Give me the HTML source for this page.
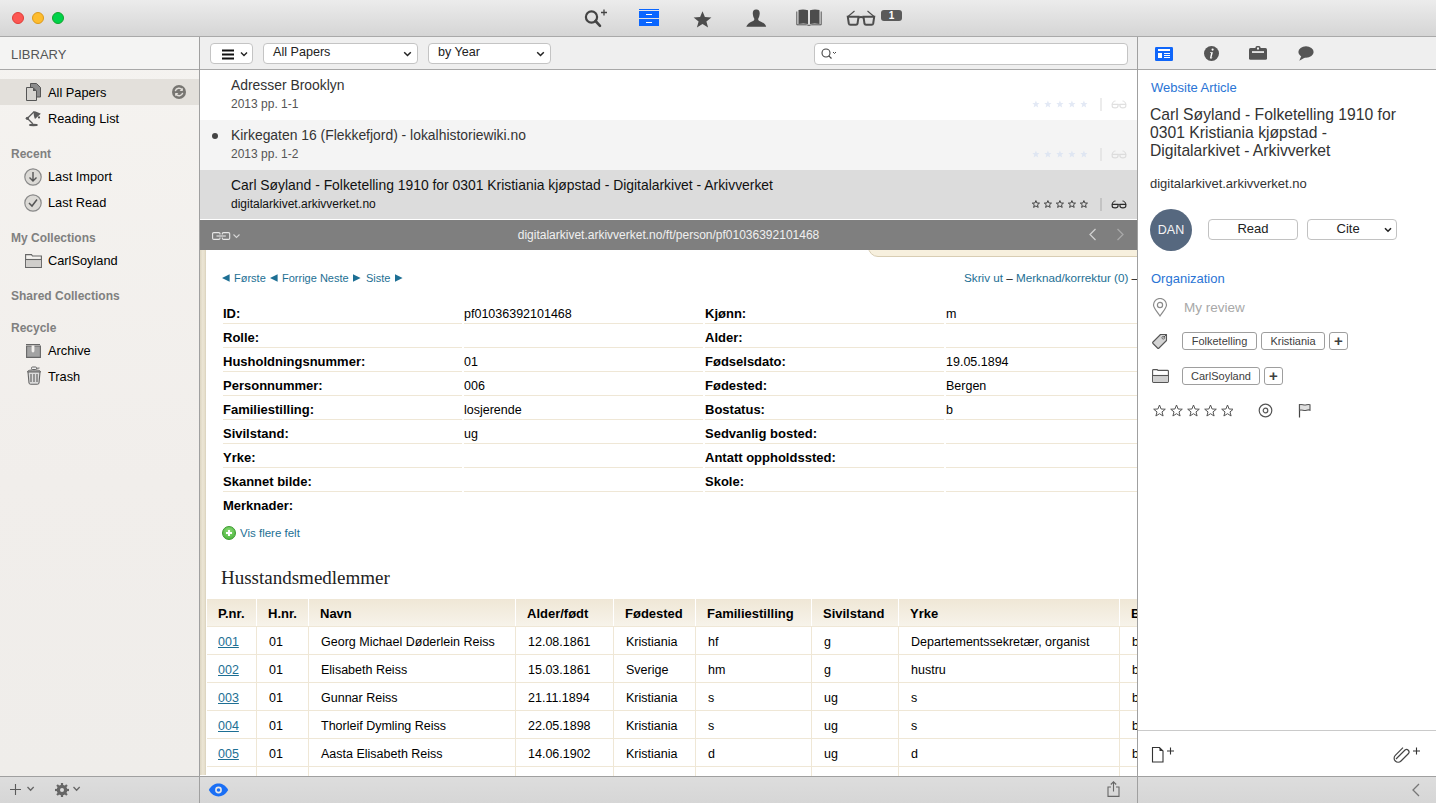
<!DOCTYPE html>
<html><head><meta charset="utf-8">
<style>
*{margin:0;padding:0;box-sizing:border-box}
html,body{width:1436px;height:803px;overflow:hidden;background:#fff;font-family:"Liberation Sans",sans-serif;}
.abs{position:absolute}
#titlebar{left:0;top:0;width:1436px;height:37px;background:linear-gradient(#ececec,#d5d5d5);border-bottom:1px solid #a9a9a9}
.tl{position:absolute;top:12px;width:12px;height:12px;border-radius:50%}
#sidebar{left:0;top:37px;width:199px;height:739px;background:linear-gradient(#f5f3f0,#f1eeeb 60%,#efedea)}
#libhdr{left:0;top:37px;width:199px;height:33px;background:#f4f4f3;border-bottom:1px solid #a8a8a8}
#vdiv1{left:199px;top:37px;width:1px;height:766px;background:#a0a0a0}
#vdiv2{left:1137px;top:37px;width:1px;height:766px;background:#a0a0a0}
.sitem{position:absolute;left:48px;font-size:12.8px;color:#000}
.shdr{position:absolute;left:11px;font-size:12px;font-weight:bold;color:#808080}
#toolbar{left:200px;top:37px;width:937px;height:33px;background:#efefef;border-bottom:1px solid #a8a8a8}
.btn{position:absolute;background:#fff;border:1px solid #c4c4c4;border-radius:4px;font-size:13px;color:#222}
.row{position:absolute;left:200px;width:937px;height:50px}
.rtitle{position:absolute;left:31px;top:7px;font-size:13.9px;color:#333}
.rsub{position:absolute;left:31px;top:27px;font-size:12px;color:#555}
#webhdr{left:200px;top:220px;width:937px;height:30px;background:#7f7f7f}
#web{left:200px;top:250px;width:937px;height:526px;background:#fff;overflow:hidden}
#webin{position:absolute;left:0;top:-2px;width:937px;height:527px}
#bottombar{left:0;top:776px;width:1436px;height:27px;background:linear-gradient(#dddddd,#d6d6d6);border-top:1px solid #a0a0a0}
#rpanel{left:1138px;top:37px;width:298px;height:739px;background:#fff}
#rtabs{left:1138px;top:37px;width:298px;height:33px;background:#efefef;border-bottom:1px solid #a8a8a8}
.dl{position:absolute;height:24px;border-bottom:1px solid #efe7d6;font-size:13px;font-weight:bold;color:#000;padding-top:7px;line-height:14px}
.dv{position:absolute;height:24px;border-bottom:1px solid #efe7d6;font-size:12.5px;color:#000;padding-top:7px;line-height:14px}
.nav{position:absolute;font-size:11px;color:#1d6f94;white-space:nowrap}
.th{position:absolute;top:351px;height:27px;background:linear-gradient(#efe7d6,#f7f3ea);font-size:13px;font-weight:bold;color:#000;padding:8px 0 0 11px;line-height:14px;white-space:nowrap}
.td{position:absolute;height:28px;border-left:1px solid #efe7d6;border-top:1px solid #efe7d6;font-size:12.5px;color:#000;padding:8px 0 0 11px;line-height:14px;white-space:nowrap;overflow:hidden}
.td a{color:#1d6f94;text-decoration:underline}
.tag{position:absolute;height:18px;border:1px solid #9e9e9e;border-radius:3px;background:#fff;font-size:11px;color:#404040;text-align:center;line-height:16px}
.v{font-family:"Liberation Sans",sans-serif;font-size:12px;color:#000}
</style></head><body>
<div id="titlebar" class="abs">
  <div class="tl" style="left:12px;background:#fc5753;border:1px solid #df3d38"></div>
  <div class="tl" style="left:32px;background:#fdbc2e;border:1px solid #dc9a1a"></div>
  <div class="tl" style="left:52px;background:#00d24a;border:1px solid #12a52b"></div>
<svg class="abs" style="left:584px;top:8px" width="26" height="20" viewBox="0 0 26 20"><circle cx="7.5" cy="9" r="5.6" fill="none" stroke="#444" stroke-width="2.2"/><path d="M11.5 13 L16 17.8" stroke="#444" stroke-width="2.6" stroke-linecap="round"/><path d="M20 1.5 V7.5 M17 4.5 H23" stroke="#444" stroke-width="1.3"/></svg>
<svg class="abs" style="left:639px;top:9px" width="20" height="18" viewBox="0 0 20 18"><rect x="0" y="0" width="20" height="1" fill="#0a66ff"/><rect x="0" y="2" width="20" height="7" fill="#0a66ff"/><rect x="0" y="10" width="20" height="7" fill="#0a66ff"/><rect x="7" y="5" width="6" height="1" fill="#fff"/><rect x="7" y="13" width="6" height="1" fill="#fff"/></svg>
<svg class="abs" style="left:693px;top:11px" width="19" height="17" viewBox="0 0 19 17"><path d="M9.5 0.3 L11.9 6.1 L18.4 6.4 L13.4 10.5 L15.1 16.6 L9.5 13.1 L3.9 16.6 L5.6 10.5 L0.6 6.4 L7.1 6.1z" fill="#4d4d4d"/></svg>
<svg class="abs" style="left:746px;top:9px" width="21" height="19" viewBox="0 0 21 19"><path d="M10 0.6 C7.5 0.6 6.6 2.5 6.8 4.8 C7 7 7.6 8.6 8.3 9.8 C8.5 11 8 11.6 6 12.4 C3 13.6 1 15.5 0.3 17.8 H20.2 C19.5 15.5 17.5 13.6 14.5 12.4 C12.5 11.6 12 11 12.2 9.8 C12.9 8.6 13.5 7 13.7 4.8 C13.9 2.5 13 0.6 10.5 0.6z" fill="#4a4a4a"/></svg>
<svg class="abs" style="left:796px;top:9px" width="26" height="17" viewBox="0 0 26 17"><path d="M2.5 1 C5.5 0.3 9 0.3 12 1.2 V15 C9 14.2 5.5 14.2 2.5 15z M14 1.2 C17 0.3 20.5 0.3 23.5 1 V15 C20.5 14.2 17 14.2 14 15z" fill="#4d4d4d"/><path d="M0.8 2.5 V15.8 H10.5 C11.5 15.8 12 16.4 13 16.4 C14 16.4 14.5 15.8 15.5 15.8 H25.2 V2.5" fill="none" stroke="#555" stroke-width="1"/></svg>
<svg class="abs" style="left:846px;top:10px" width="30" height="16" viewBox="0 0 30 16"><path d="M2 6.5 L8.5 1 M28 6.5 L21.5 1" fill="none" stroke="#4d4d4d" stroke-width="1.1"/><path d="M1.8 6.8 H12.5 L11.5 13.8 C11.3 14.6 11 14.8 10 14.8 H4.5 C3.5 14.8 3 14.5 2.8 13.5z M17.5 6.8 H28.2 L27.2 13.5 C27 14.5 26.5 14.8 25.5 14.8 H20 C19 14.8 18.7 14.6 18.5 13.8z" fill="none" stroke="#4d4d4d" stroke-width="2"/><path d="M12.3 7.5 C14 7 16 7 17.7 7.5" fill="none" stroke="#4d4d4d" stroke-width="2"/></svg>
<div class="abs" style="left:881px;top:10px;width:21px;height:11px;border-radius:3px;background:#5a5a5a;color:#fff;font-size:10px;font-weight:bold;text-align:center;line-height:11px">1</div>
</div>
<div id="sidebar" class="abs"></div>
<div id="libhdr" class="abs"><div style="position:absolute;left:11px;top:10px;font-size:13px;color:#555">LIBRARY</div></div>
<div class="abs" style="left:0;top:79px;width:199px;height:26px;background:#e3e0db"></div>
<svg class="abs" style="left:26px;top:83px" width="15" height="18" viewBox="0 0 15 18"><path d="M4.5 0.5 H10.5 L14.5 4.5 V14 H4.5z" fill="#8c8c8c" stroke="#555" stroke-width="1"/><path d="M0.5 4.5 H7 L10.5 8 V17.5 H0.5z" fill="#d6d4d0" stroke="#555" stroke-width="1"/><path d="M7 4.5 V8 H10.5z" fill="#555"/></svg>
<svg class="abs" style="left:172px;top:85px" width="14" height="14" viewBox="0 0 14 14"><circle cx="7" cy="7" r="7" fill="#787672"/><path d="M3.3 6.2 A3.8 3.8 0 0 1 10.2 5" fill="none" stroke="#e3e0db" stroke-width="1.4"/><path d="M10.8 2.8 V6 H7.6z" fill="#e3e0db"/><path d="M10.7 7.8 A3.8 3.8 0 0 1 3.8 9" fill="none" stroke="#e3e0db" stroke-width="1.4"/><path d="M3.2 11.2 V8 H6.4z" fill="#e3e0db"/></svg>
<svg class="abs" style="left:20px;top:105px" width="30" height="30" viewBox="0 0 30 30"><path d="M7.5 13.3 L14 6.8" stroke="#5a5a5a" stroke-width="1.3"/><path d="M8 14 L12.8 18.8" stroke="#5a5a5a" stroke-width="1.3"/><circle cx="7.3" cy="13.3" r="1.6" fill="#5a5a5a"/><path d="M13.5 6.2 C15 5.8 19 7.5 20.8 8.8 L15 14 C14 12 13.5 9 13.5 6.2z" fill="#5a5a5a"/><circle cx="19" cy="12.4" r="1.1" fill="#5a5a5a"/><ellipse cx="13.4" cy="20" rx="4.5" ry="1.2" fill="#5a5a5a"/></svg>
<svg class="abs" style="left:24px;top:168px" width="18" height="18" viewBox="0 0 18 18"><circle cx="9" cy="9" r="8.2" fill="#dcdad6" stroke="#8a8a8a" stroke-width="1.2"/><path d="M9 4 V13 M5.5 9.5 L9 13 L12.5 9.5" fill="none" stroke="#555" stroke-width="1.4"/></svg>
<svg class="abs" style="left:24px;top:194px" width="18" height="18" viewBox="0 0 18 18"><circle cx="9" cy="9" r="8.2" fill="#dcdad6" stroke="#8a8a8a" stroke-width="1.2"/><path d="M5 9 L8 12 L13 5.5" fill="none" stroke="#555" stroke-width="1.5"/></svg>
<svg class="abs" style="left:25px;top:254px" width="17" height="14" viewBox="0 0 17 14"><path d="M0.6 0.6 H6.5 L7.5 2 H16.4 V13.4 H0.6z" fill="#f4f2ef" stroke="#666" stroke-width="1.1"/><rect x="1.2" y="6" width="14.6" height="7" fill="#d0cecb"/><path d="M0.6 5.5 H16.4" stroke="#666" stroke-width="1.1"/></svg>
<svg class="abs" style="left:26px;top:343px" width="15" height="15" viewBox="0 0 15 15"><path d="M0 1.5 H14" stroke="#666" stroke-width="1"/><path d="M0.6 3 H14.4 V14.4 H0.6z" fill="#a3a3a3" stroke="#666" stroke-width="1.1"/><path d="M5.6 2.5 H8.4 V8 A1.4 1.4 0 0 1 5.6 8z" fill="#f3f1ee"/></svg>
<svg class="abs" style="left:27px;top:366px" width="14" height="19" viewBox="0 0 14 19"><rect x="4.5" y="1" width="5" height="2.5" rx="1" fill="#eee" stroke="#666" stroke-width="1"/><path d="M9.5 2.3 L12.5 2" stroke="#666" stroke-width="1"/><path d="M0.5 6 C0.5 4.5 2 4 7 4 C12 4 13.5 4.5 13.5 6 Z" fill="#ccc" stroke="#666" stroke-width="1"/><path d="M1 6 L2 17 C2.2 18 3 18.3 4 18.3 H10 C11 18.3 11.8 18 12 17 L13 6z" fill="#dcdcdc" stroke="#666" stroke-width="1.1"/><path d="M4 8 V16 M7 8 V16 M10 8 V16" stroke="#666" stroke-width="1.2"/></svg>
<div class="sitem" style="top:85px">All Papers</div>
<div class="sitem" style="top:111px">Reading List</div>
<div class="shdr" style="top:147px">Recent</div>
<div class="sitem" style="top:169px">Last Import</div>
<div class="sitem" style="top:195px">Last Read</div>
<div class="shdr" style="top:231px">My Collections</div>
<div class="sitem" style="top:253px">CarlSoyland</div>
<div class="shdr" style="top:289px">Shared Collections</div>
<div class="shdr" style="top:321px">Recycle</div>
<div class="sitem" style="top:343px">Archive</div>
<div class="sitem" style="top:369px">Trash</div>

<div id="toolbar" class="abs"></div>
<div class="btn" style="left:210px;top:43px;width:43px;height:21px"><svg style="position:absolute;left:10px;top:5px" width="28" height="11" viewBox="0 0 28 11"><path d="M1 1.5 H13 M1 5.5 H13 M1 9.5 H13" stroke="#111" stroke-width="1.9"/><path d="M20 3.5 L23 6.5 L26 3.5" fill="none" stroke="#222" stroke-width="1.4"/></svg></div>
<div class="btn" style="left:263px;top:43px;width:155px;height:21px"><span style="position:absolute;left:9px;top:1px;font-size:12.6px">All Papers</span><svg style="position:absolute;right:5px;top:7px" width="9" height="6" viewBox="0 0 9 6"><path d="M1.2 1.2 L4.5 4.5 L7.8 1.2" fill="none" stroke="#222" stroke-width="1.5"/></svg></div>
<div class="btn" style="left:428px;top:43px;width:123px;height:21px"><span style="position:absolute;left:9px;top:1px;font-size:12.6px">by Year</span><svg style="position:absolute;right:5px;top:7px" width="9" height="6" viewBox="0 0 9 6"><path d="M1.2 1.2 L4.5 4.5 L7.8 1.2" fill="none" stroke="#222" stroke-width="1.5"/></svg></div>
<div class="btn" style="left:814px;top:43px;width:314px;height:22px;border-radius:4px"><svg style="position:absolute;left:6px;top:4px" width="18" height="12" viewBox="0 0 18 12"><circle cx="5" cy="5" r="4" fill="none" stroke="#444" stroke-width="1.1"/><path d="M7.8 7.8 L10.5 10.5" stroke="#444" stroke-width="1.2"/><path d="M12 4 L13.5 5.5 L15 4" fill="none" stroke="#444" stroke-width="1"/></svg></div>

<div class="row" style="top:70px;background:#fff"><div class="rtitle">Adresser Brooklyn</div><div class="rsub">2013 pp. 1-1</div></div>
<div class="row" style="top:120px;background:#f4f4f4"><div class="rtitle">Kirkegaten 16 (Flekkefjord) - lokalhistoriewiki.no</div><div class="rsub">2013 pp. 1-2</div></div>
<div class="row" style="top:170px;background:#dcdcdc;height:49px"><div class="rtitle" style="color:#111">Carl Søyland - Folketelling 1910 for 0301 Kristiania kjøpstad - Digitalarkivet - Arkivverket</div><div class="rsub" style="color:#111">digitalarkivet.arkivverket.no</div></div>

<svg class="abs" style="left:1031px;top:100px" width="60" height="9" viewBox="0 0 60 9"><path transform="translate(1,0)" d="M3.9 0.6 L4.9 3 L7.5 3.1 L5.5 4.8 L6.2 7.4 L3.9 6 L1.6 7.4 L2.3 4.8 L0.3 3.1 L2.9 3z" fill="#e3e9f5" stroke="none" stroke-width="0.9" stroke-linejoin="round"/><path transform="translate(13,0)" d="M3.9 0.6 L4.9 3 L7.5 3.1 L5.5 4.8 L6.2 7.4 L3.9 6 L1.6 7.4 L2.3 4.8 L0.3 3.1 L2.9 3z" fill="#e3e9f5" stroke="none" stroke-width="0.9" stroke-linejoin="round"/><path transform="translate(25,0)" d="M3.9 0.6 L4.9 3 L7.5 3.1 L5.5 4.8 L6.2 7.4 L3.9 6 L1.6 7.4 L2.3 4.8 L0.3 3.1 L2.9 3z" fill="#e3e9f5" stroke="none" stroke-width="0.9" stroke-linejoin="round"/><path transform="translate(37,0)" d="M3.9 0.6 L4.9 3 L7.5 3.1 L5.5 4.8 L6.2 7.4 L3.9 6 L1.6 7.4 L2.3 4.8 L0.3 3.1 L2.9 3z" fill="#e3e9f5" stroke="none" stroke-width="0.9" stroke-linejoin="round"/><path transform="translate(49,0)" d="M3.9 0.6 L4.9 3 L7.5 3.1 L5.5 4.8 L6.2 7.4 L3.9 6 L1.6 7.4 L2.3 4.8 L0.3 3.1 L2.9 3z" fill="#e3e9f5" stroke="none" stroke-width="0.9" stroke-linejoin="round"/></svg><div class="abs" style="left:1100px;top:98px;width:2px;height:13px;background:#ececec"></div><svg class="abs" style="left:1111px;top:100px" width="16" height="9" viewBox="0 0 16 9"><path d="M1.3 4.5 C1.3 2.5 2.5 1 4.5 1 M14.7 4.5 C14.7 2.5 13.5 1 11.5 1" fill="none" stroke="#e0e0e0" stroke-width="1"/><path d="M1.2 4.3 H7 V6 C7 7.5 6.2 7.8 4.1 7.8 C2 7.8 1.2 7.5 1.2 6z M9 4.3 H14.8 V6 C14.8 7.5 14 7.8 11.9 7.8 C9.8 7.8 9 7.5 9 6z" fill="none" stroke="#e0e0e0" stroke-width="1.2"/><path d="M7 4.8 C7.7 4.3 8.3 4.3 9 4.8" fill="none" stroke="#e0e0e0" stroke-width="1"/></svg>
<svg class="abs" style="left:1031px;top:150px" width="60" height="9" viewBox="0 0 60 9"><path transform="translate(1,0)" d="M3.9 0.6 L4.9 3 L7.5 3.1 L5.5 4.8 L6.2 7.4 L3.9 6 L1.6 7.4 L2.3 4.8 L0.3 3.1 L2.9 3z" fill="#dfe6f2" stroke="none" stroke-width="0.9" stroke-linejoin="round"/><path transform="translate(13,0)" d="M3.9 0.6 L4.9 3 L7.5 3.1 L5.5 4.8 L6.2 7.4 L3.9 6 L1.6 7.4 L2.3 4.8 L0.3 3.1 L2.9 3z" fill="#dfe6f2" stroke="none" stroke-width="0.9" stroke-linejoin="round"/><path transform="translate(25,0)" d="M3.9 0.6 L4.9 3 L7.5 3.1 L5.5 4.8 L6.2 7.4 L3.9 6 L1.6 7.4 L2.3 4.8 L0.3 3.1 L2.9 3z" fill="#dfe6f2" stroke="none" stroke-width="0.9" stroke-linejoin="round"/><path transform="translate(37,0)" d="M3.9 0.6 L4.9 3 L7.5 3.1 L5.5 4.8 L6.2 7.4 L3.9 6 L1.6 7.4 L2.3 4.8 L0.3 3.1 L2.9 3z" fill="#dfe6f2" stroke="none" stroke-width="0.9" stroke-linejoin="round"/><path transform="translate(49,0)" d="M3.9 0.6 L4.9 3 L7.5 3.1 L5.5 4.8 L6.2 7.4 L3.9 6 L1.6 7.4 L2.3 4.8 L0.3 3.1 L2.9 3z" fill="#dfe6f2" stroke="none" stroke-width="0.9" stroke-linejoin="round"/></svg><div class="abs" style="left:1100px;top:148px;width:2px;height:13px;background:#e6e6e6"></div><svg class="abs" style="left:1111px;top:150px" width="16" height="9" viewBox="0 0 16 9"><path d="M1.3 4.5 C1.3 2.5 2.5 1 4.5 1 M14.7 4.5 C14.7 2.5 13.5 1 11.5 1" fill="none" stroke="#dcdcdc" stroke-width="1"/><path d="M1.2 4.3 H7 V6 C7 7.5 6.2 7.8 4.1 7.8 C2 7.8 1.2 7.5 1.2 6z M9 4.3 H14.8 V6 C14.8 7.5 14 7.8 11.9 7.8 C9.8 7.8 9 7.5 9 6z" fill="none" stroke="#dcdcdc" stroke-width="1.2"/><path d="M7 4.8 C7.7 4.3 8.3 4.3 9 4.8" fill="none" stroke="#dcdcdc" stroke-width="1"/></svg>
<svg class="abs" style="left:1031px;top:200px" width="60" height="9" viewBox="0 0 60 9"><path transform="translate(1,0)" d="M3.9 0.6 L4.9 3 L7.5 3.1 L5.5 4.8 L6.2 7.4 L3.9 6 L1.6 7.4 L2.3 4.8 L0.3 3.1 L2.9 3z" fill="none" stroke="#333" stroke-width="0.9" stroke-linejoin="round"/><path transform="translate(13,0)" d="M3.9 0.6 L4.9 3 L7.5 3.1 L5.5 4.8 L6.2 7.4 L3.9 6 L1.6 7.4 L2.3 4.8 L0.3 3.1 L2.9 3z" fill="none" stroke="#333" stroke-width="0.9" stroke-linejoin="round"/><path transform="translate(25,0)" d="M3.9 0.6 L4.9 3 L7.5 3.1 L5.5 4.8 L6.2 7.4 L3.9 6 L1.6 7.4 L2.3 4.8 L0.3 3.1 L2.9 3z" fill="none" stroke="#333" stroke-width="0.9" stroke-linejoin="round"/><path transform="translate(37,0)" d="M3.9 0.6 L4.9 3 L7.5 3.1 L5.5 4.8 L6.2 7.4 L3.9 6 L1.6 7.4 L2.3 4.8 L0.3 3.1 L2.9 3z" fill="none" stroke="#333" stroke-width="0.9" stroke-linejoin="round"/><path transform="translate(49,0)" d="M3.9 0.6 L4.9 3 L7.5 3.1 L5.5 4.8 L6.2 7.4 L3.9 6 L1.6 7.4 L2.3 4.8 L0.3 3.1 L2.9 3z" fill="none" stroke="#333" stroke-width="0.9" stroke-linejoin="round"/></svg><div class="abs" style="left:1100px;top:198px;width:2px;height:13px;background:#c3c3c3"></div><svg class="abs" style="left:1111px;top:200px" width="16" height="9" viewBox="0 0 16 9"><path d="M1.3 4.5 C1.3 2.5 2.5 1 4.5 1 M14.7 4.5 C14.7 2.5 13.5 1 11.5 1" fill="none" stroke="#2a2a2a" stroke-width="1"/><path d="M1.2 4.3 H7 V6 C7 7.5 6.2 7.8 4.1 7.8 C2 7.8 1.2 7.5 1.2 6z M9 4.3 H14.8 V6 C14.8 7.5 14 7.8 11.9 7.8 C9.8 7.8 9 7.5 9 6z" fill="none" stroke="#2a2a2a" stroke-width="1.2"/><path d="M7 4.8 C7.7 4.3 8.3 4.3 9 4.8" fill="none" stroke="#2a2a2a" stroke-width="1"/></svg>
<div class="abs" style="left:212px;top:133px;width:6px;height:6px;border-radius:50%;background:#444"></div>
<div id="webhdr" class="abs"><div style="position:absolute;left:0;width:937px;top:8px;text-align:center;font-size:12px;color:#f0f0f0">digitalarkivet.arkivverket.no/ft/person/pf01036392101468</div><svg style="position:absolute;left:12px;top:12px" width="30" height="9" viewBox="0 0 30 9"><path d="M8 2.5 V1.8 C8 1 7.6 0.6 6.8 0.6 H1.8 C1 0.6 0.6 1 0.6 1.8 V6.2 C0.6 7 1 7.4 1.8 7.4 H6.8 C7.6 7.4 8 7 8 6.2 V5.5" fill="none" stroke="#e8e8e8" stroke-width="1.1"/><path d="M10.3 2.5 V1.8 C10.3 1 10.7 0.6 11.5 0.6 H16.5 C17.3 0.6 17.7 1 17.7 1.8 V6.2 C17.7 7 17.3 7.4 16.5 7.4 H11.5 C10.7 7.4 10.3 7 10.3 6.2 V5.5" fill="none" stroke="#e8e8e8" stroke-width="1.1"/><path d="M4.5 4 H13.8" stroke="#e8e8e8" stroke-width="1.1"/><path d="M21.5 2.5 L24.5 5.5 L27.5 2.5" fill="none" stroke="#d6d6d6" stroke-width="1.1"/></svg>
<svg style="position:absolute;left:888px;top:8px" width="10" height="13" viewBox="0 0 10 13"><path d="M7.5 1 L2 6.5 L7.5 12" fill="none" stroke="#d0d0d0" stroke-width="1.3"/></svg>
<svg style="position:absolute;left:915px;top:8px" width="10" height="13" viewBox="0 0 10 13"><path d="M2.5 1 L8 6.5 L2.5 12" fill="none" stroke="#a8a8a8" stroke-width="1.3"/></svg>
</div>
<div id="web" class="abs"><div id="webin">
<div class="abs" style="left:0;top:0;width:6px;height:527px;background:linear-gradient(90deg,#ddd6c2,#ebe5d5 45%,#e6dfcc 75%,#d9d1bc)"></div>
<div class="abs" style="left:668px;top:-6px;width:300px;height:15px;background:#f7f0de;border:1px solid #d8cdb3;border-radius:0 0 0 10px"></div>
<svg class="abs" style="left:22px;top:26px" width="8" height="8" viewBox="0 0 8 8"><path d="M0 4 L7.6 0.3 V7.7z" fill="#1d6f94"/></svg><div class="nav" style="left:34px;top:24px">Første</div><svg class="abs" style="left:70px;top:26px" width="8" height="8" viewBox="0 0 8 8"><path d="M0 4 L7.6 0.3 V7.7z" fill="#1d6f94"/></svg><div class="nav" style="left:82px;top:24px">Forrige Neste</div><svg class="abs" style="left:153px;top:26px" width="8" height="8" viewBox="0 0 8 8"><path d="M7.6 4 L0 0.3 V7.7z" fill="#1d6f94"/></svg><div class="nav" style="left:166px;top:24px">Siste</div><svg class="abs" style="left:195px;top:26px" width="8" height="8" viewBox="0 0 8 8"><path d="M7.6 4 L0 0.3 V7.7z" fill="#1d6f94"/></svg>
<div class="nav" style="left:764px;top:23px;font-size:11.7px">Skriv ut <span style="color:#000">–</span> Merknad/korrektur (0) <span style="color:#000">–</span></div>
<div class="dl" style="top:52px;left:23px;width:239px;">ID:</div>
<div class="dv" style="top:52px;left:264px;width:239px;">pf01036392101468</div>
<div class="dl" style="top:52px;left:505px;width:239px">Kjønn:</div>
<div class="dv" style="top:52px;left:746px;width:200px">m</div>
<div class="dl" style="top:76px;left:23px;width:239px;">Rolle:</div>
<div class="dv" style="top:76px;left:264px;width:239px;"></div>
<div class="dl" style="top:76px;left:505px;width:239px">Alder:</div>
<div class="dv" style="top:76px;left:746px;width:200px"></div>
<div class="dl" style="top:100px;left:23px;width:239px;">Husholdningsnummer:</div>
<div class="dv" style="top:100px;left:264px;width:239px;">01</div>
<div class="dl" style="top:100px;left:505px;width:239px">Fødselsdato:</div>
<div class="dv" style="top:100px;left:746px;width:200px">19.05.1894</div>
<div class="dl" style="top:124px;left:23px;width:239px;">Personnummer:</div>
<div class="dv" style="top:124px;left:264px;width:239px;">006</div>
<div class="dl" style="top:124px;left:505px;width:239px">Fødested:</div>
<div class="dv" style="top:124px;left:746px;width:200px">Bergen</div>
<div class="dl" style="top:148px;left:23px;width:239px;">Familiestilling:</div>
<div class="dv" style="top:148px;left:264px;width:239px;">losjerende</div>
<div class="dl" style="top:148px;left:505px;width:239px">Bostatus:</div>
<div class="dv" style="top:148px;left:746px;width:200px">b</div>
<div class="dl" style="top:172px;left:23px;width:239px;">Sivilstand:</div>
<div class="dv" style="top:172px;left:264px;width:239px;">ug</div>
<div class="dl" style="top:172px;left:505px;width:239px">Sedvanlig bosted:</div>
<div class="dv" style="top:172px;left:746px;width:200px"></div>
<div class="dl" style="top:196px;left:23px;width:239px;">Yrke:</div>
<div class="dv" style="top:196px;left:264px;width:239px;"></div>
<div class="dl" style="top:196px;left:505px;width:239px">Antatt oppholdssted:</div>
<div class="dv" style="top:196px;left:746px;width:200px"></div>
<div class="dl" style="top:220px;left:23px;width:239px;">Skannet bilde:</div>
<div class="dv" style="top:220px;left:264px;width:239px;"></div>
<div class="dl" style="top:220px;left:505px;width:239px">Skole:</div>
<div class="dv" style="top:220px;left:746px;width:200px"></div>
<div class="dl" style="top:244px;left:23px;width:239px;border-color:transparent;">Merknader:</div>
<div class="dv" style="top:244px;left:264px;width:239px;border-color:transparent;"></div>
<div class="abs" style="left:22px;top:278px;width:14px;height:14px;border-radius:50%;background:radial-gradient(circle at 50% 35%,#8fdc7a,#3fae33);border:1px solid #3a9a2e"></div>
<div class="abs" style="left:26px;top:284px;width:6px;height:2px;background:#fff"></div>
<div class="abs" style="left:28px;top:282px;width:2px;height:6px;background:#fff"></div>
<div class="nav" style="left:40px;top:279px;font-size:11.5px">Vis flere felt</div>
<div class="abs" style="left:21px;top:319px;font-family:'Liberation Serif',serif;font-size:19px;color:#222">Husstandsmedlemmer</div>
<div class="th" style="left:7px;width:49px">P.nr.</div>
<div class="th" style="left:57px;width:51px">H.nr.</div>
<div class="th" style="left:109px;width:206px">Navn</div>
<div class="th" style="left:316px;width:97px">Alder/født</div>
<div class="th" style="left:414px;width:81px">Fødested</div>
<div class="th" style="left:496px;width:115px">Familiestilling</div>
<div class="th" style="left:612px;width:86px">Sivilstand</div>
<div class="th" style="left:699px;width:220px">Yrke</div>
<div class="th" style="left:920px;width:79px">B</div>
<div class="td" style="border-left:0;padding-left:11px;left:7px;top:378px;width:50px"><a>001</a></div>
<div class="td" style="left:56px;top:378px;width:52px;padding-left:12px">01</div>
<div class="td" style="left:108px;top:378px;width:207px;padding-left:12px">Georg Michael Døderlein Reiss</div>
<div class="td" style="left:315px;top:378px;width:98px;padding-left:12px">12.08.1861</div>
<div class="td" style="left:413px;top:378px;width:82px;padding-left:12px">Kristiania</div>
<div class="td" style="left:495px;top:378px;width:116px;padding-left:12px">hf</div>
<div class="td" style="left:611px;top:378px;width:87px;padding-left:12px">g</div>
<div class="td" style="left:698px;top:378px;width:221px;padding-left:12px">Departementssekretær, organist</div>
<div class="td" style="left:919px;top:378px;width:80px;padding-left:12px">b</div>
<div class="td" style="border-left:0;padding-left:11px;left:7px;top:406px;width:50px"><a>002</a></div>
<div class="td" style="left:56px;top:406px;width:52px;padding-left:12px">01</div>
<div class="td" style="left:108px;top:406px;width:207px;padding-left:12px">Elisabeth Reiss</div>
<div class="td" style="left:315px;top:406px;width:98px;padding-left:12px">15.03.1861</div>
<div class="td" style="left:413px;top:406px;width:82px;padding-left:12px">Sverige</div>
<div class="td" style="left:495px;top:406px;width:116px;padding-left:12px">hm</div>
<div class="td" style="left:611px;top:406px;width:87px;padding-left:12px">g</div>
<div class="td" style="left:698px;top:406px;width:221px;padding-left:12px">hustru</div>
<div class="td" style="left:919px;top:406px;width:80px;padding-left:12px">b</div>
<div class="td" style="border-left:0;padding-left:11px;left:7px;top:434px;width:50px"><a>003</a></div>
<div class="td" style="left:56px;top:434px;width:52px;padding-left:12px">01</div>
<div class="td" style="left:108px;top:434px;width:207px;padding-left:12px">Gunnar Reiss</div>
<div class="td" style="left:315px;top:434px;width:98px;padding-left:12px">21.11.1894</div>
<div class="td" style="left:413px;top:434px;width:82px;padding-left:12px">Kristiania</div>
<div class="td" style="left:495px;top:434px;width:116px;padding-left:12px">s</div>
<div class="td" style="left:611px;top:434px;width:87px;padding-left:12px">ug</div>
<div class="td" style="left:698px;top:434px;width:221px;padding-left:12px">s</div>
<div class="td" style="left:919px;top:434px;width:80px;padding-left:12px">b</div>
<div class="td" style="border-left:0;padding-left:11px;left:7px;top:462px;width:50px"><a>004</a></div>
<div class="td" style="left:56px;top:462px;width:52px;padding-left:12px">01</div>
<div class="td" style="left:108px;top:462px;width:207px;padding-left:12px">Thorleif Dymling Reiss</div>
<div class="td" style="left:315px;top:462px;width:98px;padding-left:12px">22.05.1898</div>
<div class="td" style="left:413px;top:462px;width:82px;padding-left:12px">Kristiania</div>
<div class="td" style="left:495px;top:462px;width:116px;padding-left:12px">s</div>
<div class="td" style="left:611px;top:462px;width:87px;padding-left:12px">ug</div>
<div class="td" style="left:698px;top:462px;width:221px;padding-left:12px">s</div>
<div class="td" style="left:919px;top:462px;width:80px;padding-left:12px">b</div>
<div class="td" style="border-left:0;padding-left:11px;left:7px;top:490px;width:50px"><a>005</a></div>
<div class="td" style="left:56px;top:490px;width:52px;padding-left:12px">01</div>
<div class="td" style="left:108px;top:490px;width:207px;padding-left:12px">Aasta Elisabeth Reiss</div>
<div class="td" style="left:315px;top:490px;width:98px;padding-left:12px">14.06.1902</div>
<div class="td" style="left:413px;top:490px;width:82px;padding-left:12px">Kristiania</div>
<div class="td" style="left:495px;top:490px;width:116px;padding-left:12px">d</div>
<div class="td" style="left:611px;top:490px;width:87px;padding-left:12px">ug</div>
<div class="td" style="left:698px;top:490px;width:221px;padding-left:12px">d</div>
<div class="td" style="left:919px;top:490px;width:80px;padding-left:12px">b</div>
<div class="td" style="border-left:0;padding-left:11px;left:7px;top:518px;width:50px"></div>
<div class="td" style="left:56px;top:518px;width:52px;padding-left:12px"></div>
<div class="td" style="left:108px;top:518px;width:207px;padding-left:12px"></div>
<div class="td" style="left:315px;top:518px;width:98px;padding-left:12px"></div>
<div class="td" style="left:413px;top:518px;width:82px;padding-left:12px"></div>
<div class="td" style="left:495px;top:518px;width:116px;padding-left:12px"></div>
<div class="td" style="left:611px;top:518px;width:87px;padding-left:12px"></div>
<div class="td" style="left:698px;top:518px;width:221px;padding-left:12px"></div>
<div class="td" style="left:919px;top:518px;width:80px;padding-left:12px"></div>
</div></div>

<div id="rpanel" class="abs"></div>
<div id="rtabs" class="abs"></div>
<!-- right tabs icons -->
<svg class="abs" style="left:1155px;top:47px" width="18" height="14" viewBox="0 0 18 14"><rect x="0" y="0" width="18" height="14" rx="1.3" fill="#0f66fa"/><rect x="3" y="2" width="12" height="2" fill="#fff"/><rect x="3" y="6" width="4" height="5" fill="#fff"/><rect x="9" y="6" width="6" height="1" fill="#fff"/><rect x="9" y="8" width="6" height="1" fill="#fff"/><rect x="9" y="10" width="6" height="1" fill="#fff"/></svg>
<svg class="abs" style="left:1204px;top:46px" width="15" height="15" viewBox="0 0 15 15"><circle cx="7.5" cy="7.5" r="7.5" fill="#555"/><circle cx="8.6" cy="3.6" r="1.1" fill="#fff"/><path d="M6.2 6.3 H8.9 L7.6 11.3 C7.5 11.7 7.8 11.8 8.3 11.4 L8.5 11.8 C7.5 12.6 6.9 12.8 6.4 12.6 C6 12.4 6 12 6.1 11.6 L7.1 7 H6z" fill="#fff"/></svg>
<svg class="abs" style="left:1249px;top:46px" width="18" height="14" viewBox="0 0 18 14"><rect x="0" y="2" width="18" height="11.7" rx="1.5" fill="#555"/><rect x="6.5" y="0" width="5" height="4.5" rx="1.5" fill="#555"/><rect x="3" y="5.2" width="12" height="1.7" fill="#f0f0f0"/><rect x="8" y="1.5" width="2" height="2" fill="#f0f0f0"/></svg>
<svg class="abs" style="left:1298px;top:46px" width="16" height="15" viewBox="0 0 16 15"><ellipse cx="8" cy="6" rx="7.6" ry="5.8" fill="#555"/><path d="M3.5 9.5 L1.3 14.7 L7.5 11.3z" fill="#555"/></svg>
<div class="abs" style="left:1151px;top:80px;font-size:13px;color:#2a74d5">Website Article</div>
<div class="abs" style="left:1150px;top:106px;width:280px;font-size:15.7px;line-height:18px;color:#333">Carl Søyland - Folketelling 1910 for<br>0301 Kristiania kjøpstad -<br>Digitalarkivet - Arkivverket</div>
<div class="abs" style="left:1150px;top:176px;font-size:13px;color:#333">digitalarkivet.arkivverket.no</div>
<div class="abs" style="left:1150px;top:209px;width:42px;height:42px;border-radius:50%;background:#56687f;color:#f4f4f4;font-size:12.5px;text-align:center;line-height:42px">DAN</div>
<div class="abs" style="left:1208px;top:219px;width:90px;height:21px;border:1px solid #c2c2c2;border-radius:4px;background:#fff;font-size:13px;color:#222;text-align:center;line-height:18px">Read</div>
<div class="abs" style="left:1307px;top:219px;width:90px;height:21px;border:1px solid #c2c2c2;border-radius:4px;background:#fff;font-size:13px;color:#222;line-height:18px"><span style="position:absolute;left:28.5px">Cite</span><svg style="position:absolute;left:76px;top:7px" width="8" height="6" viewBox="0 0 8 6"><path d="M1 1.2 L4 4.2 L7 1.2" stroke="#222" stroke-width="1.6" fill="none"/></svg></div>
<div class="abs" style="left:1151px;top:271px;font-size:13px;color:#2a74d5">Organization</div>
<svg class="abs" style="left:1152px;top:298px" width="16" height="19" viewBox="0 0 16 19"><path d="M8 18 C5 13.5 1.5 10 1.5 7 A6.5 6.5 0 0 1 14.5 7 C14.5 10 11 13.5 8 18z" fill="none" stroke="#8a8a8a" stroke-width="1.2"/><circle cx="8" cy="7" r="2.6" fill="none" stroke="#8a8a8a" stroke-width="1.2"/></svg>
<div class="abs" style="left:1184px;top:300px;font-size:13.5px;color:#a8a8a8">My review</div>
<svg class="abs" style="left:1152px;top:333px" width="16" height="16" viewBox="0 0 16 16"><path d="M8.5 1.5 L14.5 1.5 L14.5 7.5 L7 15 C6.5 15.5 6 15.5 5.5 15 L1 10.5 C0.5 10 0.5 9.5 1 9z" fill="#d4d4d4" stroke="#555" stroke-width="1.1" stroke-linejoin="round"/><circle cx="11.3" cy="4.7" r="1.3" fill="#fff" stroke="#555" stroke-width="0.9"/><path d="M11.5 4.5 L14 2" stroke="#555" stroke-width="1"/></svg>
<div class="tag" style="left:1182px;top:332px;width:75px">Folketelling</div>
<div class="tag" style="left:1261px;top:332px;width:64px">Kristiania</div>
<div class="tag" style="left:1329px;top:332px;width:19px;font-weight:bold;font-size:15px;line-height:15px">+</div>
<svg class="abs" style="left:1152px;top:369px" width="17" height="14" viewBox="0 0 17 14"><path d="M0.6 1.5 C0.6 0.9 0.9 0.6 1.5 0.6 H5 C5.6 0.6 5.8 1 6 1.4 H15.5 C16 1.4 16.4 1.8 16.4 2.3 V12.5 C16.4 13 16 13.4 15.5 13.4 H1.5 C1 13.4 0.6 13 0.6 12.5z" fill="#fff" stroke="#555" stroke-width="1.1"/><rect x="1.2" y="7" width="14.6" height="5.9" fill="#d0d0d0"/><path d="M0.6 6.5 H16.4" stroke="#555" stroke-width="1.1"/></svg>
<div class="tag" style="left:1182px;top:367px;width:78px">CarlSoyland</div>
<div class="tag" style="left:1264px;top:367px;width:19px;font-weight:bold;font-size:15px;line-height:15px">+</div>
<svg class="abs" style="left:1153px;top:403.5px" width="80" height="14" viewBox="0 0 80 14"><g fill="none" stroke="#555" stroke-width="1"><path d="M6.5 1 L8.1 5 L12.3 5.2 L9 7.9 L10.1 12 L6.5 9.7 L2.9 12 L4 7.9 L0.7 5.2 L4.9 5z"/><path transform="translate(17,0)" d="M6.5 1 L8.1 5 L12.3 5.2 L9 7.9 L10.1 12 L6.5 9.7 L2.9 12 L4 7.9 L0.7 5.2 L4.9 5z"/><path transform="translate(34,0)" d="M6.5 1 L8.1 5 L12.3 5.2 L9 7.9 L10.1 12 L6.5 9.7 L2.9 12 L4 7.9 L0.7 5.2 L4.9 5z"/><path transform="translate(51,0)" d="M6.5 1 L8.1 5 L12.3 5.2 L9 7.9 L10.1 12 L6.5 9.7 L2.9 12 L4 7.9 L0.7 5.2 L4.9 5z"/><path transform="translate(68,0)" d="M6.5 1 L8.1 5 L12.3 5.2 L9 7.9 L10.1 12 L6.5 9.7 L2.9 12 L4 7.9 L0.7 5.2 L4.9 5z"/></g></svg>
<svg class="abs" style="left:1257.5px;top:403px" width="15" height="15" viewBox="0 0 15 15"><circle cx="7.5" cy="7.5" r="6.3" fill="none" stroke="#555" stroke-width="1.2"/><circle cx="7.5" cy="7.5" r="2.3" fill="none" stroke="#555" stroke-width="1.2"/></svg>
<svg class="abs" style="left:1298px;top:403px" width="14" height="15" viewBox="0 0 14 15"><path d="M1.5 1 V14.5" stroke="#444" stroke-width="1.2"/><path d="M1.5 1.8 C4 0.8 6 2.8 8.5 1.8 C10 1.3 11 1.3 12 1.8 V7.2 C11 6.7 10 6.7 8.5 7.2 C6 8.2 4 6.2 1.5 7.2z" fill="#e0e0e0" stroke="#555" stroke-width="1.1"/></svg>
<div class="abs" style="left:1138px;top:730px;width:298px;height:1px;background:#cacaca"></div>
<svg class="abs" style="left:1151px;top:745px" width="25" height="18" viewBox="0 0 25 18"><path d="M1.5 2.5 H8.5 L12 6 V17 H1.5z" fill="#fff" stroke="#333" stroke-width="1.1"/><path d="M8.5 2.5 V6 H12z" fill="#333"/><path d="M19.5 2.5 V9.5 M16 6 H23" stroke="#333" stroke-width="1.1"/></svg>
<svg class="abs" style="left:1392px;top:745px" width="29" height="18" viewBox="0 0 29 18"><path d="M4 15 L13 6 A2.5 2.5 0 0 1 16.5 9.5 L9 17 A4 4 0 0 1 3.3 11.3 L11 3.6" fill="none" stroke="#444" stroke-width="1.2" transform="translate(0,-1)"/><path d="M24.5 2.5 V9.5 M21 6 H28" stroke="#333" stroke-width="1.1"/></svg>

<div id="bottombar" class="abs"></div>
<svg class="abs" style="left:0px;top:770px" width="100" height="33" viewBox="0 0 100 33"><path d="M15.5 14 V25 M10 19.5 H21" stroke="#5a5a5a" stroke-width="1.1"/><path d="M27.5 17 L30.6 20.2 L33.7 17" fill="none" stroke="#666" stroke-width="1.3"/><path d="M73.5 17 L76.6 20.2 L79.7 17" fill="none" stroke="#666" stroke-width="1.3"/><g transform="translate(62 20)"><circle r="5.3" fill="#666"/><g fill="#666"><rect x="-1.1" y="-7" width="2.2" height="14"/><rect x="-1.1" y="-7" width="2.2" height="14" transform="rotate(45)"/><rect x="-1.1" y="-7" width="2.2" height="14" transform="rotate(90)"/><rect x="-1.1" y="-7" width="2.2" height="14" transform="rotate(135)"/></g><circle r="2" fill="#dcdcdc"/></g></svg>

<svg class="abs" style="left:208px;top:783px" width="21" height="14" viewBox="0 0 21 14"><path d="M0.8 7 C3.5 2.3 7 0.6 10.5 0.6 C14 0.6 17.5 2.3 20.2 7 C17.5 11.7 14 13.4 10.5 13.4 C7 13.4 3.5 11.7 0.8 7z" fill="#1a6ff5"/><circle cx="10.5" cy="7" r="3.4" fill="#e8e8e8"/><circle cx="10.5" cy="7" r="1.8" fill="#1a6ff5"/></svg>
<svg class="abs" style="left:1107px;top:781px" width="13" height="16" viewBox="0 0 13 16"><path d="M4 6 H1 V15.4 H12 V6 H9" fill="none" stroke="#666" stroke-width="1.1"/><path d="M6.5 1 V10.5 M3.8 3.5 L6.5 0.8 L9.2 3.5" fill="none" stroke="#666" stroke-width="1.1"/></svg>
<svg class="abs" style="left:1411px;top:783px" width="10" height="14" viewBox="0 0 10 14"><path d="M8 1 L2 7 L8 13" fill="none" stroke="#777" stroke-width="1.3"/></svg>
<div id="vdiv1" class="abs"></div>
<div id="vdiv2" class="abs"></div>
</body></html>
